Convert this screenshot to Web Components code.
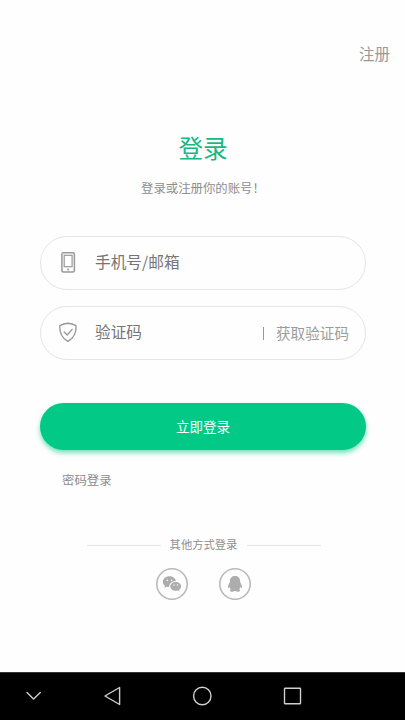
<!DOCTYPE html>
<html lang="zh-CN">
<head>
<meta charset="utf-8">
<title>登录</title>
<style>
html,body{margin:0;height:100%;background:#fefefe}
body{font-family:"Noto Sans CJK SC",sans-serif;overflow:hidden}
</style>
</head>
<body>
<login-page></login-page>
<script>
const define=(name,html)=>{
  const t=document.createElement('template');
  t.innerHTML=html;
  customElements.define(name,class extends HTMLElement{
    constructor(){super();this.attachShadow({mode:'open'}).append(t.content.cloneNode(true));}
  });
};

define('input-field',`<style>
:host{display:flex;align-items:center;box-sizing:border-box;height:54px;border:1px solid #e5e5e5;border-radius:27px;padding:0 16px 0 17px;font-size:15.7px;color:#757575;line-height:24px}
.icon{width:20px;height:22px;display:flex;margin-right:17px}
.label{flex:1;padding-bottom:3px}
</style><span class="icon"><slot name="icon"></slot></span><span class="label"><slot></slot></span><slot name="action"></slot>`);

define('code-action',`<style>
:host{display:flex;align-items:center;font-size:14.6px;color:#9c9c9c;line-height:22px}
i{width:1px;height:13px;background:#999;margin-right:12px}
</style><i></i><span><slot></slot></span>`);

define('primary-button',`<style>
:host{display:block}
button{display:block;width:100%;height:47px;border:0;border-radius:24px;background:#03c987;color:#fff;font:13.5px/20px "Noto Sans CJK SC",sans-serif;padding:0 0 2px;box-shadow:0 3px 5px rgba(3,201,135,.55)}
</style><button><slot></slot></button>`);

define('line-divider',`<style>
:host{display:flex;align-items:center;font-size:11.3px;line-height:16px;color:#8f8f8f}
i{flex:1;height:1px;background:#e3e3e3}
span{margin:-1px 10px 1px 9px}
</style><i></i><span><slot></slot></span><i></i>`);

define('social-button',`<style>
:host{display:flex;width:32px;height:32px;box-shadow:inset 0 0 0 1.6px #b9b9b9;border-radius:50%;align-items:center;justify-content:center}
</style><slot></slot>`);

define('nav-bar',`<style>
:host{display:block;box-sizing:border-box;height:48px;background:#000;border-top:1px solid #333}
svg{display:block}
</style><svg width="405" height="47" viewBox="0 673 405 47" fill="none" stroke="#cfcfcf" stroke-width="1.4" stroke-linejoin="round" stroke-linecap="round">
<path d="M27 692.5l6.600 6.500 6.700-6.500"/><path d="M119.600 687.500v17L105 696z"/><circle cx="202.300" cy="696" r="8.700"/><rect x="284.500" y="688.200" width="16" height="15.600" rx=".6"/></svg>`);

define('login-page',`<style>
:host{display:flex;flex-direction:column;height:720px;width:405px;background:#fefefe}
header{display:flex;justify-content:flex-end;padding:41px 15px 0 0;font-size:15.5px;line-height:24px;color:#999}
h1{margin:64px 0 0;padding-left:1px;text-align:center;font-size:24.6px;line-height:36px;font-weight:400;color:#18b884}
.sub{margin:14px 0 0 141px;font-size:12.4px;line-height:18px;color:#8e8e8e}
form{display:flex;flex-direction:column;gap:16px;margin:39px 39px 0 40px}
primary-button{margin:43px 39px 0 40px}
.alt{margin:20px 0 0 62px;font-size:12.4px;line-height:20px;color:#8c8c8c}
line-divider{margin:47px 84px 0 87px}
.social{display:flex;gap:31px;margin:15px 0 0 156px}
nav-bar{margin-top:auto}
svg{display:block}
</style>
<header>注册</header>
<h1>登录</h1>
<div class="sub">登录或注册你的账号！</div>
<form>
<input-field>
<svg slot="icon" width="20" height="22" viewBox="0 0 20 22" fill="none" stroke="#999"><rect x="3.900" y=".8" width="12.500" height="19.300" rx="1.500" stroke-width="1.500"/><rect x="6.200" y="3.300" width="7.900" height="11.400" stroke-width="1.200"/><circle cx="10.100" cy="17.400" r="1" fill="#999" stroke="none"/></svg>
手机号/邮箱</input-field>
<input-field>
<svg slot="icon" width="20" height="22" viewBox="0 0 20 22" fill="none" stroke="#999" stroke-width="1.4" stroke-linejoin="round" stroke-linecap="round"><path d="M9.900 1.200C7 1.300 4 2.300 1.800 3.600 1.400 10.800 3.600 16 9.900 19.400 16.200 16 18.400 10.800 18 3.600 15.800 2.300 12.800 1.300 9.900 1.200z"/><path d="M6.200 10.100l3 2.900 4.900-5.600"/></svg>
验证码<code-action slot="action">获取验证码</code-action></input-field>
</form>
<primary-button>立即登录</primary-button>
<div class="alt">密码登录</div>
<line-divider>其他方式登录</line-divider>
<div class="social">
<social-button><svg width="20" height="18" viewBox="0 0 20 18"><g fill="#adadad"><path d="M7.400 1.300C3.600 1.300.8 3.700.8 6.900c0 1.700.9 3.100 2.300 4.100l-.7 2 2.400-1.200c.8.200 1.500.3 2.500.3C7 8.600 10 6.100 13.900 6.100 13.400 3.300 10.800 1.300 7.400 1.300z"/><path d="M13.700 6.900c-3 0-5.400 1.900-5.400 4.400s2.400 4.500 5.400 4.500c.7 0 1.300-.1 1.900-.3l1.900 1-.4-1.700c1.300-.8 2.100-2 2.100-3.500 0-2.500-2.500-4.400-5.500-4.400z"/></g><g fill="#fefefe"><circle cx="5.300" cy="5.200" r=".8"/><circle cx="9.600" cy="5.200" r=".8"/><circle cx="12" cy="10" r=".7"/><circle cx="15.500" cy="10" r=".7"/></g></svg></social-button>
<social-button><svg width="20" height="18" viewBox="0 0 20 18" fill="#adadad"><path d="M10 .9C6.900.9 4.900 3 4.900 5.700v1.500C3.900 8.500 2.900 10.500 3 12.400c.1.800.8.600 1.600-.5.200.9.600 1.700 1.300 2.400-1.300.5-1.400 2.200.4 2.400 1.400.1 2.700-.1 3.400-.7h.6c.7.600 2 .8 3.400.7 1.800-.2 1.700-1.900.4-2.400.7-.7 1.100-1.500 1.300-2.400.8 1.100 1.500 1.300 1.600.5.100-1.900-.9-3.900-1.900-5.200V5.700C15.100 3 13.100.9 10 .9z"/></svg></social-button>
</div>
<nav-bar></nav-bar>`);
</script>
</body>
</html>
